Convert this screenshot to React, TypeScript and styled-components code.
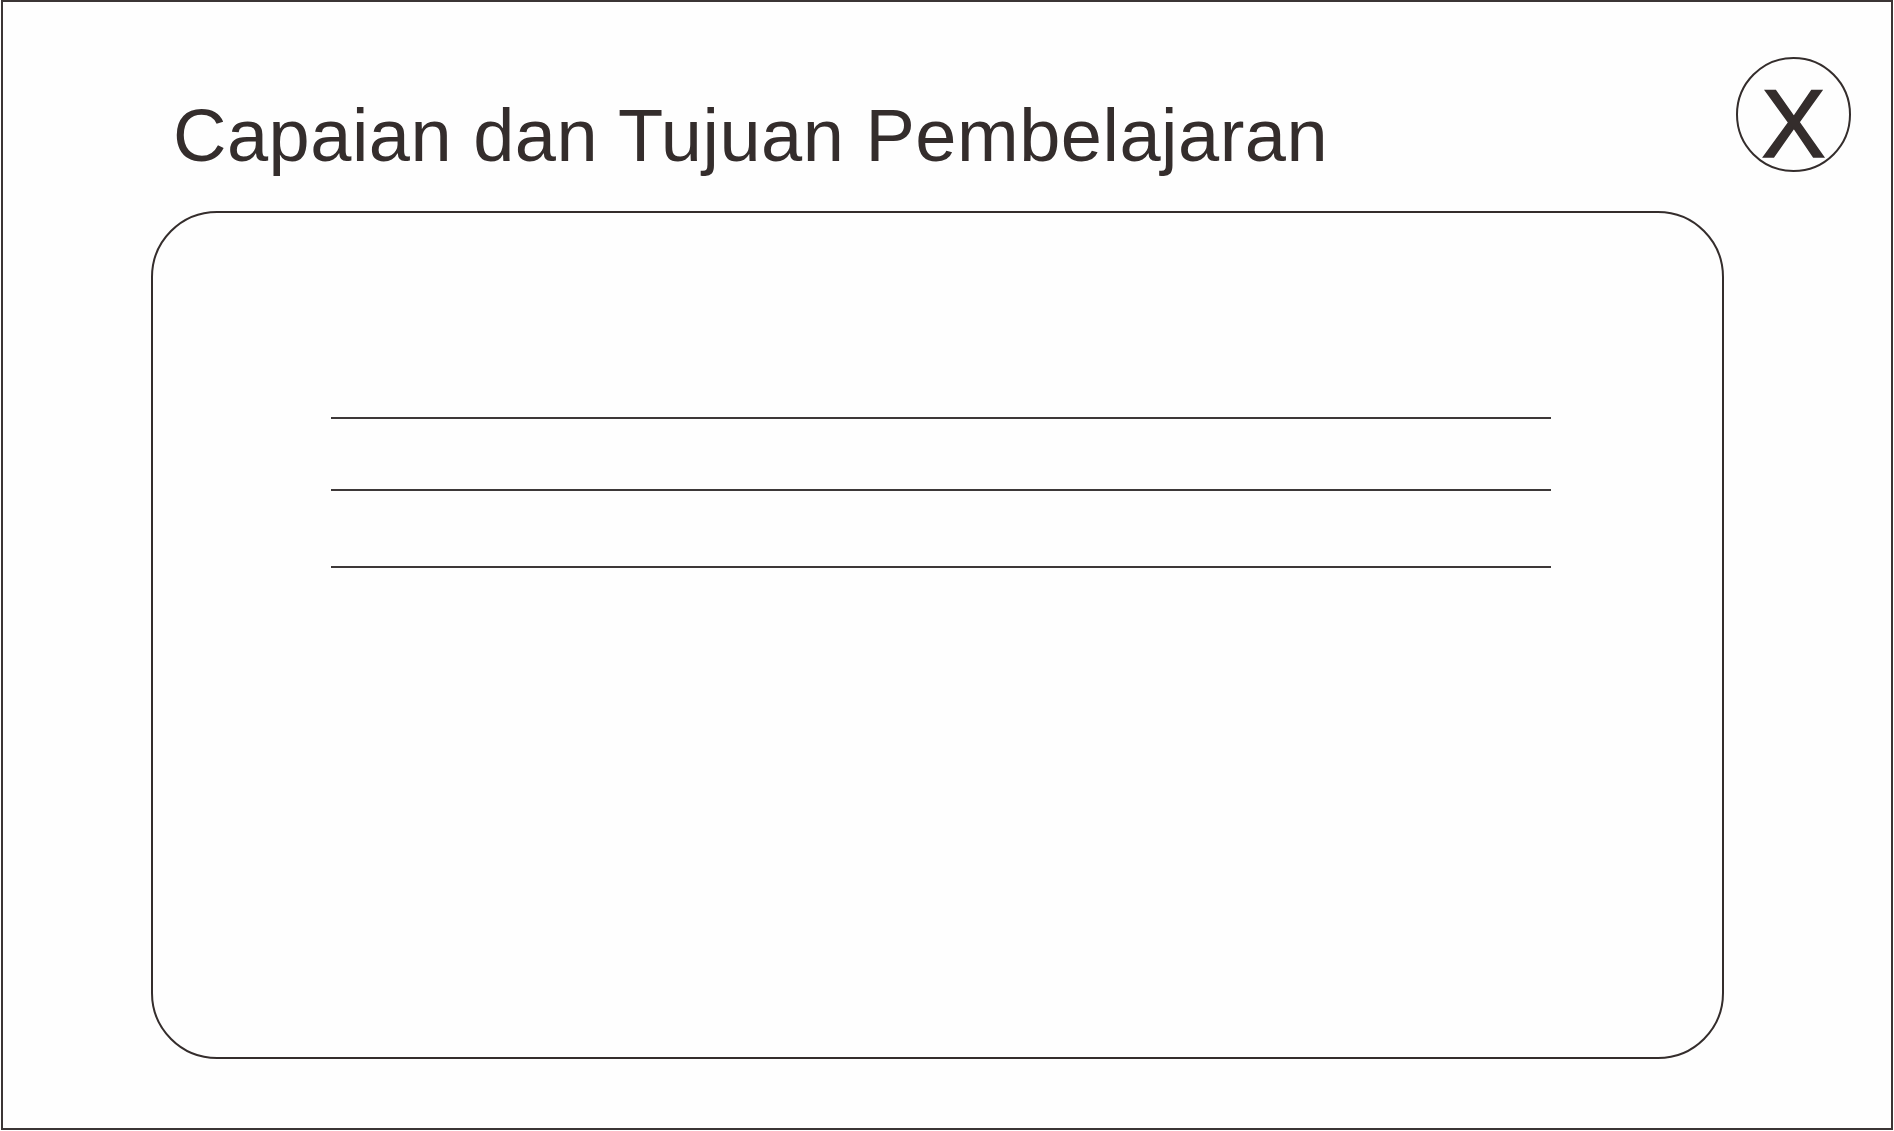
import React from "react";
import styled, { createGlobalStyle } from "styled-components";

const Global = createGlobalStyle`
  html, body { margin: 0; padding: 0; background: #ffffff; }
  body { font-family: "Liberation Sans", Arial, sans-serif; }
`;

const ink = "#342d2c";

const Frame = styled.div`
  box-sizing: border-box;
  width: 1892px;
  height: 1130px;
  margin-left: 1px;
  border: 2px solid #3b3535;
  background: #fefefe;
  display: flex;
  flex-direction: column;
`;

const Header = styled.header`
  box-sizing: border-box;
  height: 170px;
  display: flex;
  justify-content: space-between;
  align-items: flex-start;
  padding: 55px 40px 0 170px;
`;

const Title = styled.h1`
  margin: 42px 0 0 0;
  font-family: "Liberation Sans", Arial, sans-serif;
  font-weight: 400;
  font-size: 74px;
  line-height: 1;
  color: ${ink};
  letter-spacing: 0.5px;
`;

const CloseButton = styled.button`
  box-sizing: border-box;
  width: 115px;
  height: 115px;
  border-radius: 50%;
  border: 2px solid ${ink};
  background: transparent;
  padding: 18px 0 0 0;
  display: flex;
  align-items: center;
  justify-content: center;
  font-family: "Liberation Sans", Arial, sans-serif;
  font-size: 96px;
  line-height: 1;
  color: ${ink};
  -webkit-text-stroke: 1.6px ${ink};
  cursor: pointer;
`;

const Card = styled.section`
  box-sizing: border-box;
  width: 1573px;
  height: 848px;
  margin: 39px 0 0 148px;
  border: 2px solid ${ink};
  border-radius: 66px;
  padding: 204px 0 0 178px;
  display: flex;
  flex-direction: column;
`;

const Line = styled.div<{ $gap: number }>`
  width: 1220px;
  height: 2px;
  background: #3d3838;
  margin-top: ${(p) => p.$gap}px;
`;

export default function App() {
  return (
    <>
      <Global />
      <Frame>
        <Header>
          <Title>Capaian dan Tujuan Pembelajaran</Title>
          <CloseButton aria-label="Tutup">X</CloseButton>
        </Header>
        <Card>
          <Line $gap={0} />
          <Line $gap={70} />
          <Line $gap={75} />
        </Card>
      </Frame>
    </>
  );
}
